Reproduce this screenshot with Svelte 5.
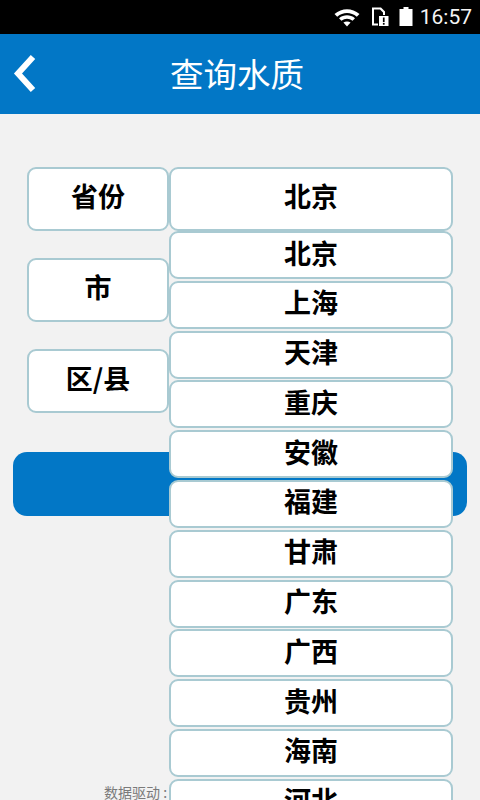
<script>
  const cities = ['北京', '上海', '天津', '重庆', '安徽', '福建', '甘肃', '广东', '广西', '贵州', '海南', '河北'];
  const labels = ['省份', '市', '区/县'];
  let selected = cities[0];
</script>

<div class="phone">
  <div class="statusbar">
    <svg class="wifi" width="26" height="20" viewBox="0 0 26 20">
      <path d="M0.5 7 C8 0.5 18 0.5 25.5 7 L22.8 9.8 C16.8 4.8 9.2 4.8 3.2 9.8 Z" fill="#fff" />
      <path d="M5 11.2 C10 7.4 16 7.4 21 11.2 L18.6 13.8 C15 11 11 11 7.4 13.8 Z" fill="#fff" />
      <path d="M9.4 15.6 C11.6 14 14.4 14 16.6 15.6 L13 19.5 Z" fill="#fff" />
    </svg>
    <svg class="sim" width="18" height="20" viewBox="0 0 18 20">
      <path d="M1 0.5 H10 L14 4.5 V8 H12 V5.5 L9 2.5 H3 V16.5 H7 V18.5 H1 Z" fill="#fff" />
      <rect x="8" y="9" width="9.5" height="10" fill="#fff" />
      <rect x="11.9" y="10.5" width="1.7" height="4.6" fill="#000" />
      <rect x="11.9" y="16" width="1.7" height="1.7" fill="#000" />
    </svg>
    <svg class="battery" width="14" height="20" viewBox="0 0 14 20">
      <path d="M4.5 0 H9.5 V2 H13.5 V19 H0.5 V2 H4.5 Z" fill="#fff" />
    </svg>
    <span class="time">16:57</span>
  </div>

  <header class="titlebar">
    <svg class="back" width="26" height="40" viewBox="0 0 26 40">
      <path d="M21 3 L6 19.5 L21 36" fill="none" stroke="#fff" stroke-width="6" />
    </svg>
    <h1>查询水质</h1>
  </header>

  <main class="content">
    <div class="form">
      <div class="labels">
        {#each labels as label}
          <div class="label">{label}</div>
        {/each}
      </div>
      <div class="picker">
        <div class="current">{selected}</div>
        <div class="options">
          {#each cities as city}
            <div class="option">{city}</div>
          {/each}
        </div>
      </div>
    </div>
    <div class="submit"></div>
    <div class="credit">数据驱动 :</div>
  </main>
</div>

<style>
  :global(body) {
    margin: 0;
    background: #f2f2f2;
  }

  .phone {
    width: 480px;
    height: 800px;
    overflow: hidden;
    display: flex;
    flex-direction: column;
    font-family: "Noto Sans CJK SC", "Liberation Sans", sans-serif;
    background: #f2f2f2;
  }

  .statusbar {
    height: 34px;
    flex: none;
    background: #000;
    display: flex;
    align-items: center;
    justify-content: flex-end;
    padding-right: 8px;
    box-sizing: border-box;
  }
  .wifi { margin-right: 11px; }
  .sim { margin-right: 10px; }
  .battery { margin-right: 7px; }
  .time {
    font-family: Roboto, sans-serif;
    font-size: 21px;
    color: #f4f4f4;
    line-height: 34px;
  }

  .titlebar {
    height: 80px;
    flex: none;
    background: #0277c6;
    position: relative;
    display: flex;
    align-items: center;
    justify-content: center;
    box-sizing: border-box;
    padding: 0 6px 4px 0;
  }
  .titlebar h1 {
    margin: 0;
    font-size: 33.5px;
    font-weight: 400;
    color: #fff;
  }
  .back {
    position: absolute;
    left: 12px;
    top: 20px;
  }

  .content {
    flex: 1;
    display: flex;
    flex-direction: column;
    padding-top: 53px;
    min-height: 0;
  }

  .form {
    display: flex;
    padding-left: 27px;
    position: relative;
    z-index: 1;
  }
  .labels {
    width: 142px;
    display: flex;
    flex-direction: column;
    gap: 27px;
  }
  .label,
  .current {
    height: 64px;
    box-sizing: border-box;
    background: #fff;
    border: 2px solid #a9cad2;
    border-radius: 9px;
    display: flex;
    align-items: center;
    justify-content: center;
    padding-bottom: 7px;
    font-size: 27px;
    font-weight: 700;
    color: #000;
  }
  .picker {
    width: 284px;
    position: relative;
  }
  .options {
    position: absolute;
    left: 0;
    right: 0;
    top: 64px;
    display: flex;
    flex-direction: column;
    gap: 1.8px;
  }
  .option {
    height: 48px;
    flex: none;
    box-sizing: border-box;
    background: #fff;
    border: 2px solid #a9cad2;
    border-radius: 9px;
    display: flex;
    align-items: center;
    justify-content: center;
    padding-bottom: 6px;
    font-size: 27px;
    font-weight: 700;
    color: #000;
  }

  .submit {
    height: 64px;
    margin: 39px 13px 0;
    background: #0277c6;
    border-radius: 14px;
    flex: none;
  }

  .credit {
    margin-top: auto;
    padding-left: 104px;
    font-size: 14px;
    line-height: 16px;
    white-space: nowrap;
    color: #7a7a7a;
  }
</style>
